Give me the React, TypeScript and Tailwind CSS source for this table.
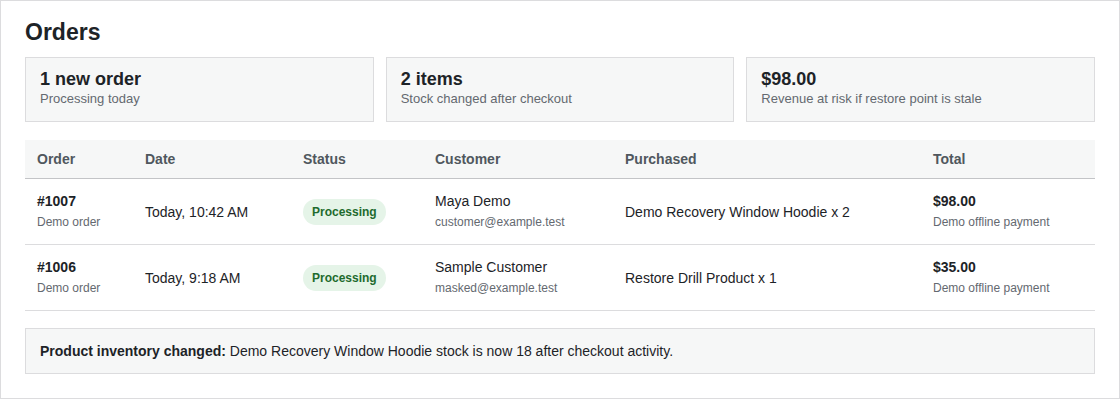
import React from "react";

const font = { fontFamily: '"Liberation Sans", Arial, Helvetica, sans-serif' };

type Row = {
  id: string;
  date: string;
  name: string;
  email: string;
  purchased: string;
  total: string;
};

const rows: Row[] = [
  {
    id: "#1007",
    date: "Today, 10:42 AM",
    name: "Maya Demo",
    email: "customer@example.test",
    purchased: "Demo Recovery Window Hoodie x 2",
    total: "$98.00",
  },
  {
    id: "#1006",
    date: "Today, 9:18 AM",
    name: "Sample Customer",
    email: "masked@example.test",
    purchased: "Restore Drill Product x 1",
    total: "$35.00",
  },
];

const cols = "grid grid-cols-[108px_158px_132px_190px_308px_1fr]";

function Card({ title, sub }: { title: string; sub: string }) {
  return (
    <div className="border border-[#dcdcde] bg-[#f6f7f7] px-[14px] pt-[11px] pb-[13px]">
      <div className="text-[18px] leading-[20px] font-bold text-[#1d2327]">{title}</div>
      <div className="mt-px text-[13px] leading-[18px] text-[#646970]">{sub}</div>
    </div>
  );
}

export default function App() {
  return (
    <div style={font} className="w-[1120px] h-[399px] border border-[#dcdcde] bg-white px-6 pt-4 pb-6 text-[#1d2327]">
      <h1 className="text-[23px] leading-[30px] font-bold mb-[10px] text-[#1d2327]">Orders</h1>

      <div className="grid grid-cols-3 gap-3">
        <Card title="1 new order" sub="Processing today" />
        <Card title="2 items" sub="Stock changed after checkout" />
        <Card title="$98.00" sub="Revenue at risk if restore point is stale" />
      </div>

      <div className="mt-[18px]">
        <div className={`${cols} bg-[#f6f7f7] border-b border-[#c3c4c7] text-[14px] leading-[17px] font-bold text-[#50575e]`}>
          {["Order", "Date", "Status", "Customer", "Purchased", "Total"].map((h) => (
            <div key={h} className="px-3 pt-[11px] pb-[10px]">
              {h}
            </div>
          ))}
        </div>
        {rows.map((r) => (
          <div key={r.id} className={`${cols} border-b border-[#dcdcde] text-[14px] items-center`}>
            <div className="px-3 pt-3 pb-[13px]">
              <div className="leading-5 font-bold">{r.id}</div>
              <div className="mt-[2px] text-[12px] leading-[18px] text-[#646970]">Demo order</div>
            </div>
            <div className="px-3 leading-5">{r.date}</div>
            <div className="px-3">
              <span className="inline-block rounded-full bg-[#e5f4e8] px-[9px] py-[5px] text-[12px] leading-4 font-bold text-[#1e6b2e]">
                Processing
              </span>
            </div>
            <div className="px-3 pb-px">
              <div className="leading-5">{r.name}</div>
              <div className="mt-[2px] text-[12px] leading-[18px] text-[#646970]">{r.email}</div>
            </div>
            <div className="px-3 leading-5">{r.purchased}</div>
            <div className="px-3 pb-px">
              <div className="leading-5 font-bold">{r.total}</div>
              <div className="mt-[2px] text-[12px] leading-[18px] text-[#646970]">Demo offline payment</div>
            </div>
          </div>
        ))}
      </div>

      <div className="mt-[17px] border border-[#dcdcde] bg-[#f6f7f7] px-[14px] py-3 text-[14px] leading-5">
        <span className="font-bold">Product inventory changed:</span> Demo Recovery Window Hoodie stock is now 18 after checkout activity.
      </div>
    </div>
  );
}
